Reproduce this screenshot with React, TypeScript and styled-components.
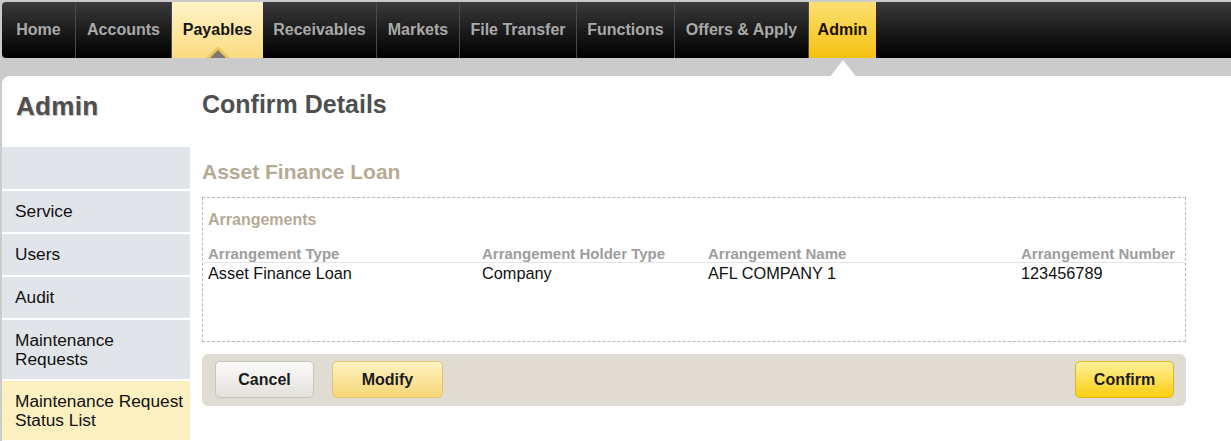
import React from "react";
import styled, { createGlobalStyle, css } from "styled-components";

const Global = createGlobalStyle`
  html, body { margin: 0; padding: 0; }
  body {
    background: #cbcbcb;
    font-family: "Liberation Sans", Arial, sans-serif;
    overflow: hidden;
  }
`;

const Page = styled.div`
  padding: 2px 0 0 2px;
  width: 1229px;
  height: 439px;
  display: flex;
  flex-direction: column;
`;

const NavBar = styled.nav`
  display: flex;
  height: 56px;
  background: linear-gradient(#3b3b3d 0%, #1c1c1c 50%, #000 100%);
  border-radius: 4px 0 0 4px;
  flex-shrink: 0;
`;

const NavItem = styled.div<{ $w: number; $state?: "light" | "active" }>`
  position: relative;
  width: ${(p) => p.$w}px;
  display: flex;
  align-items: center;
  justify-content: center;
  font-size: 16px;
  font-weight: bold;
  color: #a9a9a9;
  border-right: 1px solid #4a4a4a;
  box-sizing: border-box;
  padding-bottom: 1px;
  ${(p) =>
    p.$state === "light" &&
    css`
      background: linear-gradient(#fff4c8, #fbdb80);
      color: #151515;
      border-right: none;
    `}
  ${(p) =>
    p.$state === "active" &&
    css`
      background: linear-gradient(#fddf74, #f5c10e);
      color: #1a0e00;
      border-right: none;
    `}
`;

const GreyMarker = styled.span`
  position: absolute;
  bottom: 0;
  left: 50%;
  transform: translateX(-50%);
  width: 0;
  height: 0;
  border-left: 12px solid transparent;
  border-right: 12px solid transparent;
  border-bottom: 12px solid #e8c860;
  &::after {
    content: "";
    position: absolute;
    left: -8px;
    top: 4px;
    border-left: 8px solid transparent;
    border-right: 8px solid transparent;
    border-bottom: 8px solid #7d7a72;
  }
`;

const WhiteNotch = styled.span`
  position: absolute;
  top: 58px;
  left: 50%;
  transform: translateX(-50%);
  width: 0;
  height: 0;
  border-left: 14px solid transparent;
  border-right: 14px solid transparent;
  border-bottom: 18px solid #ffffff;
`;

const Band = styled.div`
  height: 18px;
  flex-shrink: 0;
`;

const Content = styled.div`
  flex: 1;
  background: #fff;
  border-radius: 8px 0 0 0;
  display: flex;
`;

const Sidebar = styled.aside`
  width: 188px;
  display: flex;
  flex-direction: column;
`;

const SideTitle = styled.h1`
  margin: 0;
  height: 71px;
  box-sizing: border-box;
  padding: 15px 0 0 14px;
  font-size: 26px;
  font-weight: bold;
  color: #4f4f4f;
  letter-spacing: 0.3px;
  text-shadow: 1px 1px 1px #bdbdbd;
`;

const SideItem = styled.div<{ $h: number; $active?: boolean }>`
  height: ${(p) => p.$h}px;
  box-sizing: border-box;
  background: ${(p) => (p.$active ? "#fdf0c0" : "#e1e5ea")};
  border-bottom: 2px solid #fff;
  display: flex;
  align-items: center;
  padding: 0 0 0 13px;
  font-size: 17.3px;
  line-height: 19px;
  color: #111;
`;

const Main = styled.main`
  flex: 1;
  padding: 0 45px 0 12px;
  display: flex;
  flex-direction: column;
`;

const PageTitle = styled.h2`
  margin: 0;
  height: 70px;
  box-sizing: border-box;
  padding-top: 14px;
  font-size: 25px;
  font-weight: bold;
  color: #4f4f4f;
`;

const SectionTitle = styled.h3`
  margin: 0;
  height: 51px;
  box-sizing: border-box;
  padding-top: 14px;
  font-size: 21px;
  font-weight: bold;
  color: #b6aa95;
`;

const Box = styled.section`
  height: 145px;
  box-sizing: border-box;
  border: 1px dashed #b8b8b8;
  padding: 13px 0 0 0;
`;

const BoxTitle = styled.div`
  padding-left: 5px;
  font-size: 16px;
  font-weight: bold;
  color: #b6aa95;
  height: 24px;
`;

const Table = styled.div`
  margin-top: 3px;
  display: grid;
  grid-template-columns: 274px 226px 313px 1fr;
`;

const HeadCell = styled.div`
  font-size: 15px;
  font-weight: bold;
  color: #9d9d9d;
  padding: 7px 0 0 5px;
  height: 25px;
  box-sizing: border-box;
  border-bottom: 1px solid #e4e4e4;
  white-space: nowrap;
`;

const Cell = styled.div`
  font-size: 16.3px;
  color: #111;
  padding: 1px 0 0 5px;
  white-space: nowrap;
`;

const ButtonBar = styled.div`
  margin-top: 12px;
  height: 52px;
  box-sizing: border-box;
  background: #e1dcd3;
  border-radius: 6px;
  display: flex;
  align-items: flex-start;
  padding: 7px 12px 0 13px;
  gap: 18px;
`;

const Button = styled.button<{ $w: number; $kind: "plain" | "soft" | "primary" }>`
  width: ${(p) => p.$w}px;
  height: 37px;
  border-radius: 5px;
  font-family: inherit;
  font-size: 16px;
  font-weight: bold;
  color: #1b1b1b;
  cursor: pointer;
  ${(p) =>
    p.$kind === "plain" &&
    css`
      background: linear-gradient(#fbfbfa, #e4e1dc);
      border: 1px solid #c9c4bb;
    `}
  ${(p) =>
    p.$kind === "soft" &&
    css`
      background: linear-gradient(#fff3c4, #f6d675);
      border: 1px solid #e2c46a;
    `}
  ${(p) =>
    p.$kind === "primary" &&
    css`
      background: linear-gradient(#fff09a, #fbcf12);
      border: 1px solid #e0b81a;
    `}
`;

const Spacer = styled.div`
  flex: 1;
`;

const navItems: { label: string; w: number; state?: "light" | "active" }[] = [
  { label: "Home", w: 74 },
  { label: "Accounts", w: 96 },
  { label: "Payables", w: 91, state: "light" },
  { label: "Receivables", w: 114 },
  { label: "Markets", w: 83 },
  { label: "File Transfer", w: 117 },
  { label: "Functions", w: 98 },
  { label: "Offers & Apply", w: 134 },
  { label: "Admin", w: 67, state: "active" },
];

const sideItems: { label: React.ReactNode; h: number; active?: boolean }[] = [
  { label: "", h: 44 },
  { label: "Service", h: 43 },
  { label: "Users", h: 43 },
  { label: "Audit", h: 43 },
  { label: <>Maintenance<br />Requests</>, h: 61 },
  { label: <>Maintenance Request<br />Status List</>, h: 61, active: true },
];

export default function App() {
  return (
    <>
      <Global />
      <Page>
        <NavBar>
          {navItems.map((n) => (
            <NavItem key={n.label} $w={n.w} $state={n.state}>
              {n.label}
              {n.state === "light" && <GreyMarker />}
              {n.state === "active" && <WhiteNotch />}
            </NavItem>
          ))}
        </NavBar>
        <Band />
        <Content>
          <Sidebar>
            <SideTitle>Admin</SideTitle>
            {sideItems.map((s, i) => (
              <SideItem key={i} $h={s.h} $active={s.active}>
                <span>{s.label}</span>
              </SideItem>
            ))}
          </Sidebar>
          <Main>
            <PageTitle>Confirm Details</PageTitle>
            <SectionTitle>Asset Finance Loan</SectionTitle>
            <Box>
              <BoxTitle>Arrangements</BoxTitle>
              <Table>
                <HeadCell>Arrangement Type</HeadCell>
                <HeadCell>Arrangement Holder Type</HeadCell>
                <HeadCell>Arrangement Name</HeadCell>
                <HeadCell>Arrangement Number</HeadCell>
                <Cell>Asset Finance Loan</Cell>
                <Cell>Company</Cell>
                <Cell>AFL COMPANY 1</Cell>
                <Cell>123456789</Cell>
              </Table>
            </Box>
            <ButtonBar>
              <Button $w={99} $kind="plain">Cancel</Button>
              <Button $w={111} $kind="soft">Modify</Button>
              <Spacer />
              <Button $w={99} $kind="primary">Confirm</Button>
            </ButtonBar>
          </Main>
        </Content>
      </Page>
    </>
  );
}
